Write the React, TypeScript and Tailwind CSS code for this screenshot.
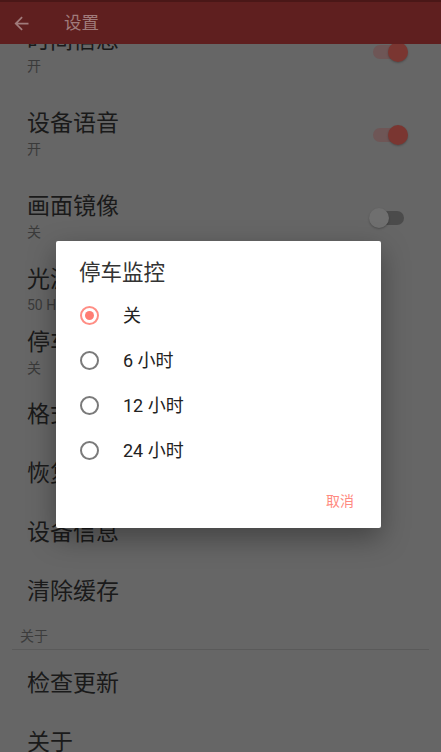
import React from "react";

const FONT = { fontFamily: 'Roboto, "Noto Sans CJK SC", "Noto Sans", sans-serif' };

function Switch({ on }: { on: boolean }) {
  return (
    <div className="relative h-[20px] w-[39px] shrink-0">
      <div
        className={
          "absolute left-[4px] right-[4px] top-[3px] h-[14px] rounded-full " +
          (on ? "bg-[#6e5656]" : "bg-[#4b4b4b]")
        }
      />
      <div
        className={
          "absolute top-0 h-[20px] w-[20px] rounded-full shadow-[0_1px_2px_rgba(0,0,0,0.25)] " +
          (on ? "right-0 bg-[#7a3631]" : "left-0 bg-[#6f6f6f]")
        }
      />
    </div>
  );
}

function SwitchRow({ title, sub, on }: { title: string; sub: string; on: boolean }) {
  return (
    <div className="flex h-[83px] items-center pl-[27px] pr-[33px]">
      <div className="flex flex-1 flex-col">
        <div className="text-[23px] leading-[28px] text-[#1a1a1a]">{title}</div>
        <div className="text-[14px] leading-[22px] text-[#3a3a3a]">{sub}</div>
      </div>
      <Switch on={on} />
    </div>
  );
}

function ListRow({ title, sub }: { title: string; sub: string }) {
  return (
    <div className="flex h-[63px] flex-col justify-center pl-[27px]">
      <div className="text-[23px] leading-[28px] text-[#1a1a1a]">{title}</div>
      <div className="text-[14px] leading-[22px] text-[#3a3a3a]">{sub}</div>
    </div>
  );
}

function PlainRow({ title }: { title: string }) {
  return (
    <div className="flex h-[59px] items-center pl-[27px]">
      <div className="text-[23px] leading-[28px] text-[#1a1a1a]">{title}</div>
    </div>
  );
}

function Radio({ selected, label }: { selected: boolean; label: string }) {
  return (
    <div className="flex h-[45px] items-center">
      <div className="flex w-[67px] justify-center">
        <div
          className={
            "flex h-[19px] w-[19px] items-center justify-center rounded-full border-2 " +
            (selected ? "border-[#ff8e85]" : "border-[#7a7a7a]")
          }
        >
          {selected && <div className="h-[9px] w-[9px] rounded-full bg-[#ff7d73]" />}
        </div>
      </div>
      <div className="text-[18px] leading-[24px] text-[#222222]">{label}</div>
    </div>
  );
}

export default function App() {
  return (
    <div className="relative h-[752px] w-[441px] overflow-hidden bg-[#666666]" style={FONT}>
      {/* scrolled list */}
      <div className="flex flex-col pt-[10px]">
        <SwitchRow title="时间信息" sub="开" on />
        <SwitchRow title="设备语音" sub="开" on />
        <SwitchRow title="画面镜像" sub="关" on={false} />
        <ListRow title="光源频率" sub="50 Hz" />
        <ListRow title="停车监控" sub="关" />
        <PlainRow title="格式化存储卡" />
        <PlainRow title="恢复出厂设置" />
        <PlainRow title="设备信息" />
        <PlainRow title="清除缓存" />
        <div className="flex h-[33px] flex-col justify-end px-[12px] pb-[4px]">
          <div className="pl-[8px] text-[14px] leading-[20px] text-[#3c3c3c]">关于</div>
          <div className="mt-[3px] h-px bg-[#5a5a5a]" />
        </div>
        <PlainRow title="检查更新" />
        <PlainRow title="关于" />
      </div>

      {/* app bar */}
      <div className="absolute left-0 right-0 top-0 flex h-[44px] items-center border-t-2 border-[#4a1717] bg-[#5f1f1f]">
        <svg className="ml-[11px] h-[21px] w-[21px]" viewBox="0 0 24 24" fill="#a07b7b">
          <path d="M20 11H7.83l5.59-5.59L12 4l-8 8 8 8 1.41-1.41L7.83 13H20v-2z" />
        </svg>
        <div className="ml-[32px] text-[17.5px] leading-[24px] text-[#a07b7b]">设置</div>
      </div>

      {/* dialog */}
      <div className="absolute left-[56px] top-[241px] flex w-[325px] flex-col rounded-[2px] bg-white pb-[17px] pt-[18px] shadow-[0_10px_28px_rgba(0,0,0,0.35)]">
        <div className="pl-[23px] text-[21.5px] leading-[28px] text-[#333333]">停车监控</div>
        <div className="mt-[6px] flex flex-col">
          <Radio selected label="关" />
          <Radio selected={false} label="6 小时" />
          <Radio selected={false} label="12 小时" />
          <Radio selected={false} label="24 小时" />
        </div>
        <div className="mt-[18px] flex justify-end pr-[27px]">
          <div className="text-[14px] leading-[20px] text-[#ff8a80]">取消</div>
        </div>
      </div>
    </div>
  );
}
